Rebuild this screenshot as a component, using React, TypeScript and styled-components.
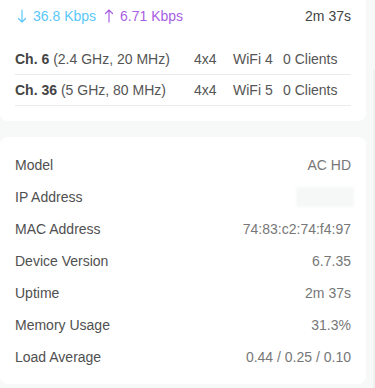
import React from "react";
import styled, { createGlobalStyle } from "styled-components";

const Global = createGlobalStyle`
  html, body { margin: 0; padding: 0; background: #f7f8f8; }
  body { font-family: "Liberation Sans", Arial, sans-serif; font-size: 14px; overflow: hidden; }
`;

const Page = styled.div`
  display: flex;
  width: 375px;
  height: 388px;
  background: #f7f8f8;
`;

const Main = styled.div`
  width: 366px;
  display: flex;
  flex-direction: column;
  gap: 16px;
`;

const Gutter = styled.div`
  flex: 1;
  display: flex;
  justify-content: flex-end;
  padding-top: 70px;
`;

const Track = styled.div`
  width: 2px;
  background: #eff0f0;
`;

const Card = styled.div<{ $top?: boolean }>`
  background: #fff;
  border-radius: ${(p) => (p.$top ? "0 0 8px 8px" : "8px")};
  padding: ${(p) => (p.$top ? "6px 15px 15px" : "12px 15px 11px")};
  display: flex;
  flex-direction: column;
`;

const SpeedRow = styled.div`
  display: flex;
  align-items: center;
  height: 20px;
  line-height: 20px;
  margin-bottom: 18px;
`;

const Speed = styled.span<{ $color: string }>`
  color: ${(p) => p.$color};
  display: inline-flex;
  align-items: center;
  margin-right: 6px;
`;

const Arrow = styled.svg`
  width: 10px;
  height: 14px;
  margin: 0 6px 0 2px;
`;

const Elapsed = styled.span`
  margin-left: auto;
  color: #444;
`;

const ChannelRow = styled.div`
  display: grid;
  grid-template-columns: 179px 39px 50px auto;
  align-items: center;
  height: 30px;
  border-bottom: 1px solid #ebebeb;
  color: #555;
`;

const ChName = styled.span`
  color: #555;
  b { color: #444; font-weight: bold; }
`;

const InfoRow = styled.div`
  display: flex;
  justify-content: space-between;
  align-items: center;
  height: 32px;
`;

const Label = styled.span`
  color: #505050;
`;

const Value = styled.span`
  color: #777;
`;

const Hidden = styled.span`
  width: 58px;
  height: 20px;
  margin-right: -3px;
  background: #f6f7f7;
  border-radius: 3px;
  filter: blur(1.5px);
`;

const DownArrow = ({ color }: { color: string }) => (
  <Arrow viewBox="0 0 10 14" fill="none" stroke={color} strokeWidth="1.2" strokeLinecap="round" strokeLinejoin="round">
    <path d="M5 1 V13 M1.5 9.5 L5 13 L8.5 9.5" />
  </Arrow>
);

const UpArrow = ({ color }: { color: string }) => (
  <Arrow viewBox="0 0 10 14" fill="none" stroke={color} strokeWidth="1.2" strokeLinecap="round" strokeLinejoin="round">
    <path d="M5 13 V1 M1.5 4.5 L5 1 L8.5 4.5" />
  </Arrow>
);

const channels = [
  { ch: "Ch. 6", band: "(2.4 GHz, 20 MHz)", mimo: "4x4", wifi: "WiFi 4", clients: "0 Clients" },
  { ch: "Ch. 36", band: "(5 GHz, 80 MHz)", mimo: "4x4", wifi: "WiFi 5", clients: "0 Clients" },
];

const info: { label: string; value: string | null }[] = [
  { label: "Model", value: "AC HD" },
  { label: "IP Address", value: null },
  { label: "MAC Address", value: "74:83:c2:74:f4:97" },
  { label: "Device Version", value: "6.7.35" },
  { label: "Uptime", value: "2m 37s" },
  { label: "Memory Usage", value: "31.3%" },
  { label: "Load Average", value: "0.44 / 0.25 / 0.10" },
];

export default function App() {
  const blue = "#5ac8fa";
  const purple = "#a85fe2";
  return (
    <>
      <Global />
      <Page>
        <Main>
          <Card $top>
            <SpeedRow>
              <Speed $color={blue}>
                <DownArrow color={blue} />
                36.8 Kbps
              </Speed>
              <Speed $color={purple}>
                <UpArrow color={purple} />
                6.71 Kbps
              </Speed>
              <Elapsed>2m 37s</Elapsed>
            </SpeedRow>
            {channels.map((c) => (
              <ChannelRow key={c.ch}>
                <ChName>
                  <b>{c.ch}</b> {c.band}
                </ChName>
                <span>{c.mimo}</span>
                <span>{c.wifi}</span>
                <span>{c.clients}</span>
              </ChannelRow>
            ))}
          </Card>
          <Card>
            {info.map((r) => (
              <InfoRow key={r.label}>
                <Label>{r.label}</Label>
                {r.value === null ? <Hidden /> : <Value>{r.value}</Value>}
              </InfoRow>
            ))}
          </Card>
        </Main>
        <Gutter>
          <Track />
        </Gutter>
      </Page>
    </>
  );
}
